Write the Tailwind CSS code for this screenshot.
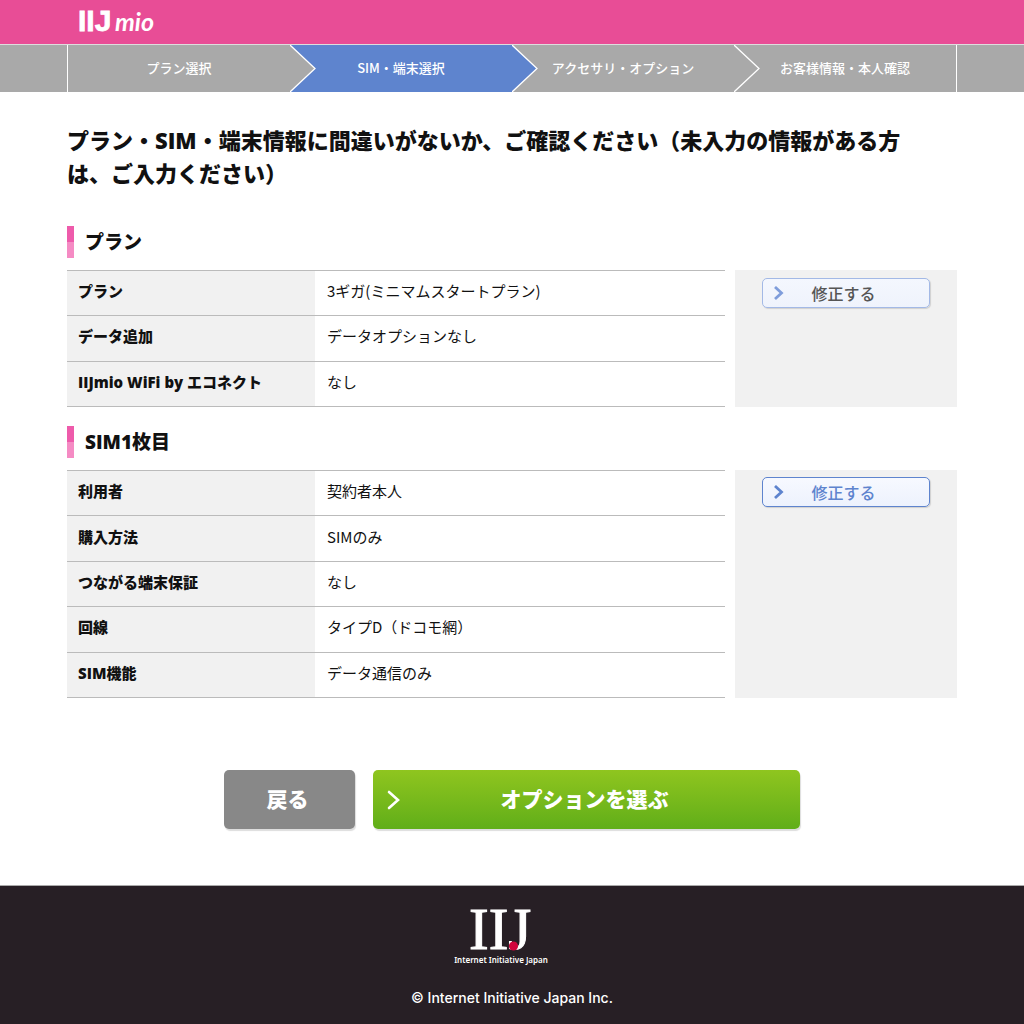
<!DOCTYPE html>
<html lang="ja">
<head>
    <meta charset="UTF-8">
    <meta name="viewport" content="width=device-width, initial-scale=1">
    <title>IIJmio</title>
    <script src="https://cdn.jsdelivr.net/npm/@tailwindcss/browser@4"></script>
</head>
<body class="min-h-screen flex flex-col bg-white text-[#111] text-[15px] leading-5 font-['Noto_Sans_CJK_JP',sans-serif]">
    <!-- Header -->
    <header class="bg-[#e84d96] h-11">
        <div class="max-w-[890px] mx-auto pl-2">
            <a href="#" aria-label="IIJmio" class="block w-24">
                <svg class="w-24 h-11" viewBox="0 0 96 44" fill="#fff">
                    <text x="3" y="31" font-family="Liberation Sans" font-weight="700" font-size="30" stroke="#fff" stroke-width=".8">IIJ</text>
                    <text x="40" y="31" font-family="Lato" font-weight="700" font-style="italic" font-size="25">mio</text>
                </svg>
            </a>
        </div>
    </header>

    <!-- Steps -->
    <nav class="bg-[#a9a9a9] border-t border-[#ddd]">
        <ol class="max-w-[890px] mx-auto grid grid-cols-4 h-[47px] border-x border-white text-[13px] font-medium text-white text-center leading-[46px]">
            <li class="relative z-30">
                プラン選択
                <svg class="absolute left-full top-0 h-full w-[26px]" viewBox="0 0 26 47" preserveAspectRatio="none">
                    <path d="M0 0L25 23.5L0 47" fill="#a9a9a9" stroke="#fff" stroke-width="1.3"/>
                </svg>
            </li>
            <li class="relative z-20 bg-[#5e84ce]" aria-current="step">
                SIM・端末選択
                <svg class="absolute left-full top-0 h-full w-[26px]" viewBox="0 0 26 47" preserveAspectRatio="none">
                    <path d="M0 0L25 23.5L0 47" fill="#5e84ce" stroke="#fff" stroke-width="1.3"/>
                </svg>
            </li>
            <li class="relative z-10">
                アクセサリ・オプション
                <svg class="absolute left-full top-0 h-full w-[26px]" viewBox="0 0 26 47" preserveAspectRatio="none">
                    <path d="M0 0L25 23.5L0 47" fill="#a9a9a9" stroke="#fff" stroke-width="1.3"/>
                </svg>
            </li>
            <li>お客様情報・本人確認</li>
        </ol>
    </nav>

    <main class="flex-1 w-full max-w-[890px] mx-auto pt-8 pb-14">
        <h1 class="text-[22px] leading-[33px] font-extrabold pr-4 font-['Open_Sans','Noto_Sans_CJK_JP',sans-serif]">プラン・SIM・端末情報に間違いがないか、ご確認ください（未入力の情報がある方は、ご入力ください）</h1>

        <!-- Plan -->
        <section class="mt-9">
            <h2 class="flex items-center gap-[11px] h-8 text-[19px] font-extrabold font-['Open_Sans','Noto_Sans_CJK_JP',sans-serif]">
                <span class="w-[7px] h-8 bg-linear-to-b from-[#ee5bab] from-50% to-[#f58bc4] to-50%"></span>
                プラン
            </h2>
            <div class="mt-3 flex gap-[10px]">
                <table class="flex-1 h-[137px] border-collapse text-left">
                    <tbody>
                        <tr class="border-y border-[#bbb]">
                            <th class="w-[248px] bg-[#f1f1f1] pl-[11px] pb-1 font-extrabold font-['Open_Sans','Noto_Sans_CJK_JP',sans-serif]">プラン</th>
                            <td class="pl-3 pb-1">3ギガ(ミニマムスタートプラン)</td>
                        </tr>
                        <tr class="border-y border-[#bbb]">
                            <th class="bg-[#f1f1f1] pl-[11px] pb-1 font-extrabold font-['Open_Sans','Noto_Sans_CJK_JP',sans-serif]">データ追加</th>
                            <td class="pl-3 pb-1">データオプションなし</td>
                        </tr>
                        <tr class="border-y border-[#bbb]">
                            <th class="bg-[#f1f1f1] pl-[11px] pb-1 font-extrabold font-['Open_Sans','Noto_Sans_CJK_JP',sans-serif]">IIJmio WiFi by エコネクト</th>
                            <td class="pl-3 pb-1">なし</td>
                        </tr>
                    </tbody>
                </table>
                <div class="w-1/4 bg-[#f1f1f1] pt-2 px-[27px]">
                    <button type="button" class="relative block w-[168px] h-[30px] pr-1 rounded-[5px] border border-[#a3b9e6] bg-linear-to-b from-[#f4f7fe] to-[#eff3fc] shadow-[1px_1px_1px_#d0d0d0] text-base leading-none font-medium text-[#555]">
                        <svg class="absolute left-[10px] top-[7px] w-3 h-4" viewBox="0 0 12 16" fill="none" stroke="#7f9ddb" stroke-width="2.8">
                            <path d="M2 1L8.500 7L2 13"/>
                        </svg>
                        修正する
                    </button>
                </div>
            </div>
        </section>

        <!-- SIM -->
        <section class="mt-[19px]">
            <h2 class="flex items-center gap-[11px] h-8 text-[19px] font-extrabold font-['Open_Sans','Noto_Sans_CJK_JP',sans-serif]">
                <span class="w-[7px] h-8 bg-linear-to-b from-[#ee5bab] from-50% to-[#f58bc4] to-50%"></span>
                SIM1枚目
            </h2>
            <div class="mt-3 flex gap-[10px]">
                <table class="flex-1 h-[228px] border-collapse text-left">
                    <tbody>
                        <tr class="border-y border-[#bbb]">
                            <th class="w-[248px] bg-[#f1f1f1] pl-[11px] pb-1 font-extrabold font-['Open_Sans','Noto_Sans_CJK_JP',sans-serif]">利用者</th>
                            <td class="pl-3 pb-1">契約者本人</td>
                        </tr>
                        <tr class="border-y border-[#bbb]">
                            <th class="bg-[#f1f1f1] pl-[11px] pb-1 font-extrabold font-['Open_Sans','Noto_Sans_CJK_JP',sans-serif]">購入方法</th>
                            <td class="pl-3 pb-1">SIMのみ</td>
                        </tr>
                        <tr class="border-y border-[#bbb]">
                            <th class="bg-[#f1f1f1] pl-[11px] pb-1 font-extrabold font-['Open_Sans','Noto_Sans_CJK_JP',sans-serif]">つながる端末保証</th>
                            <td class="pl-3 pb-1">なし</td>
                        </tr>
                        <tr class="border-y border-[#bbb]">
                            <th class="bg-[#f1f1f1] pl-[11px] pb-1 font-extrabold font-['Open_Sans','Noto_Sans_CJK_JP',sans-serif]">回線</th>
                            <td class="pl-3 pb-1">タイプD（ドコモ網）</td>
                        </tr>
                        <tr class="border-y border-[#bbb]">
                            <th class="bg-[#f1f1f1] pl-[11px] pb-1 font-extrabold font-['Open_Sans','Noto_Sans_CJK_JP',sans-serif]">SIM機能</th>
                            <td class="pl-3 pb-1">データ通信のみ</td>
                        </tr>
                    </tbody>
                </table>
                <div class="w-1/4 bg-[#f1f1f1] pt-[7px] px-[27px]">
                    <button type="button" class="relative block w-[168px] h-[30px] pr-1 rounded-[5px] border border-[#5e84ce] bg-linear-to-b from-[#f7f9ff] to-[#edf2fd] shadow-[1px_1px_1px_#d0d0d0] text-base leading-none font-medium text-[#5e84ce]">
                        <svg class="absolute left-[10px] top-[7px] w-3 h-4" viewBox="0 0 12 16" fill="none" stroke="#5e84ce" stroke-width="2.8">
                            <path d="M2 1L8.500 7L2 13"/>
                        </svg>
                        修正する
                    </button>
                </div>
            </div>
        </section>

        <!-- Buttons -->
        <div class="mt-[72px] flex justify-center gap-[18px] text-[21px] font-black text-white">
            <button type="button" class="w-[131px] h-[59px] pr-1 pb-1 rounded-[5px] bg-[#888] shadow-[1px_2px_1px_#ddd]">戻る</button>
            <button type="button" class="relative w-[427px] h-[59px] pr-1 pb-1 rounded-[5px] bg-linear-to-b from-[#8fc51f] to-[#60ae19] shadow-[1px_2px_1px_#ddd]">
                <svg class="absolute left-[14px] top-5 w-[14px] h-5" viewBox="0 0 14 20" fill="none" stroke="#fff" stroke-width="2.6" stroke-linecap="round">
                    <path d="M2 2L11 10L2 18"/>
                </svg>
                オプションを選ぶ
            </button>
        </div>
    </main>

    <footer class="bg-[#271f25] border-t border-[#aaa] text-white flex flex-col items-center py-2">
        <a href="#" aria-label="Internet Initiative Japan" class="block mr-[22px]">
            <svg class="w-[100px] h-[76px]" viewBox="0 0 100 76" fill="#fff">
                <text x="18" y="55" font-family="Liberation Serif" font-size="59" stroke="#fff" stroke-width="1">IIJ</text>
                <circle cx="62.500" cy="52" r="4.600" fill="#d0043c"/>
                <text x="50" y="69" text-anchor="middle" font-family="Noto Sans" font-weight="600" font-size="8">Internet Initiative Japan</text>
            </svg>
        </a>
        <p class="mt-[18px] mb-2 text-[14px] font-medium font-['Inter',sans-serif]">© Internet Initiative Japan Inc.</p>
    </footer>
</body>
</html>
